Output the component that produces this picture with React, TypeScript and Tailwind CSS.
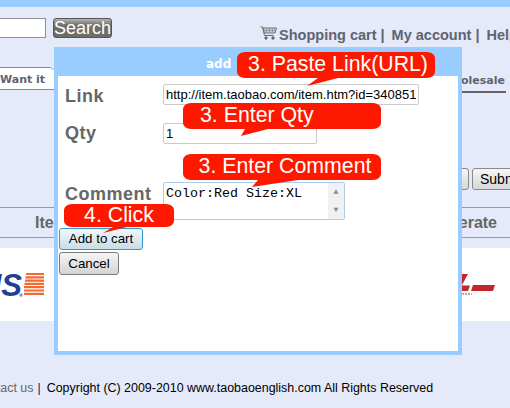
const sans = "font-['Liberation_Sans',Arial,sans-serif]";

function Callout({ className, text, tail }: { className: string; text: string; tail: string }) {
  return (
    <div className={`absolute z-20 ${className}`}>
      <div className="flex h-full items-center justify-center rounded-[8px/6px] bg-[#fe1800] text-[21.3px] leading-none text-white">
        {text}
      </div>
      <svg className="absolute left-0 top-full overflow-visible" width="1" height="1">
        <polygon points={tail} fill="#fe1800" />
      </svg>
    </div>
  );
}

function Cart() {
  return (
    <svg width="17" height="14" viewBox="0 0 17 14" fill="none" stroke="#6d6d6d" strokeWidth="1">
      <path d="M0.500 1h2l2 8.500h9" />
      <path d="M3 2h13.500l-1.500 5H4.500z" fill="#c7d1d4" />
      <path d="M6.500 2.500v4M9.500 2.500v4M12.500 2.500v4M4 4.500h11.500" stroke="#8f9ea3" />
      <circle cx="6" cy="12" r="1.200" fill="#555" />
      <circle cx="13" cy="12" r="1.200" fill="#555" />
    </svg>
  );
}

export default function App() {
  return (
    <div className={`relative h-[408px] w-[510px] overflow-hidden bg-[#e4eaf9] ${sans}`}>
      <div className="h-[7px] bg-[#99ccff]" />

      <div className="ml-[-10px] mt-[11px] flex items-start">
        <input readOnly className="h-[20px] w-[56px] border border-[#8f8f8f] bg-white" />
        <button className="ml-[7px] h-[20px] w-[61px] rounded-[3px] border border-[#555] bg-[linear-gradient(#b5b3ae,#6f6d68_35%)] text-[18px] leading-[18px] text-white">
          Search
        </button>
        <div className="ml-[148px] mt-[8px] flex w-[260px] items-start whitespace-nowrap text-[14.5px] font-bold leading-[18px] text-[#5f6470]">
          <Cart />
          <span className="ml-[2px]">Shopping cart |</span>
          <span className="ml-[7px]">My account |</span>
          <span className="ml-[7px]">Help</span>
        </div>
      </div>

      <div className="absolute left-[-40px] top-[67px] h-[23px] w-[95px] rounded-tr-[6px] border-y border-[#8a8a8a] bg-white pl-[40px] text-[11px] font-bold leading-[23px] text-[#5f6470] [font-family:'DejaVu_Sans',sans-serif]">
        Want it
      </div>
      <div className="absolute left-[420px] top-[74px] w-[86px] border-b-2 border-[#666] pb-[3px] pl-[21px] text-[11px] font-bold leading-[14px] whitespace-nowrap text-[#5f6470] [font-family:'DejaVu_Sans',sans-serif]">
        Wholesale
      </div>

      <div className="absolute left-[440px] top-[168px] h-[22px] w-[29px] rounded-[3px] border border-[#8a8a8a] bg-gradient-to-b from-[#f6f6f6] to-[#d8d8d8]" />
      <button className="absolute left-[472px] top-[168px] h-[22px] w-[60px] rounded-[3px] border border-[#8a8a8a] bg-gradient-to-b from-[#f6f6f6] to-[#d8d8d8] pl-[7px] text-left text-[14px] text-black">
        Submit
      </button>

      <div className="absolute left-0 top-[207px] flex h-[31px] w-full items-center justify-between border-y border-[#999] px-[35px] text-[16px] font-bold text-[#666]">
        <span>Item</span>
        <span className="-mr-[22px]">Operate</span>
      </div>

      <div className="absolute left-0 top-[248px] h-[73px] w-full bg-white">
        <svg className="absolute left-0 top-[24px]" width="46" height="27" viewBox="0 0 46 27">
          <text x="22" y="24" textAnchor="end" fontSize="31" fontWeight="900" fontStyle="italic" fill="#1d3f94" fontFamily="Liberation Sans">MS</text>
          <path d="M26 2h18M25.500 5.300h18.500M25 8.600h19M24.500 11.900h19.500M24 15.200h20M24 18.500h20M24 21.800h20" stroke="#ef6a35" strokeWidth="2.200" />
          <circle cx="21" cy="23" r="1.800" fill="#8aa0c8" />
        </svg>
        <svg className="absolute left-[462px] top-[26px]" width="33" height="24" viewBox="0 0 33 24">
          <path d="M0 0h6L0 11zM0 11.500h8l-2 5.500H0zM11 11h22l-2 6H9z" fill="#c1272d" />
          <path d="M0 20h10" stroke="#b9a9a9" strokeWidth="2" strokeDasharray="2 1" />
        </svg>
      </div>

      <div className="absolute left-0 top-[380px] flex whitespace-nowrap text-[12.45px] leading-[16px]">
        <span className="ml-[-26px] text-[#666]">Contact us</span>
        <span className="ml-[4px] text-[#3a0a50]">|</span>
        <span className="ml-[6px] text-black">Copyright (C) 2009-2010 www.taobaoenglish.com All Rights Reserved</span>
      </div>

      <div className="absolute left-[54px] top-[47px] z-10 h-[308px] w-[408px] border-x-4 border-b-4 border-[#99ccff] bg-white">
        <div className="h-[29px] bg-[#99ccff] pl-[148px] pt-[9px] text-[12px] font-bold leading-[16px] text-white [font-family:'DejaVu_Sans',sans-serif]">
          add
        </div>
        <div className="px-[2px]">
          <div className="flex h-[37px] items-start pl-[5px] pt-[8px]">
            <span className="mt-px w-[98px] text-[18px] font-bold leading-[22px] tracking-[0.5px] text-[#666]">Link</span>
            <input
              readOnly
              value="http://item.taobao.com/item.htm?id=340851"
              className="h-[21px] w-[256px] rounded-[2px] border border-[#c9c9c9] px-[2px] text-[13px] text-black"
            />
          </div>
          <div className="flex h-[60px] items-start pl-[5px] pt-[9px]">
            <span className="w-[98px] text-[18px] font-bold leading-[22px] tracking-[0.5px] text-[#666]">Qty</span>
            <input
              readOnly
              value="1"
              className="mt-px h-[21px] w-[154px] rounded-[2px] border border-[#c9c9c9] px-[2px] text-[13px] text-black"
            />
          </div>
          <div className="flex h-[50px] items-start pl-[5px]">
            <span className="mt-[10px] w-[98px] text-[18px] font-bold leading-[22px] tracking-[0.5px] text-[#666]">Comment</span>
            <div className="relative mt-[9px] h-[38px] w-[182px] rounded-[2px] border border-[#a9cdea] pl-[2px] pt-[3px] font-['Liberation_Mono',monospace] text-[13.33px] leading-[16px] text-black">
              Color:Red Size:XL
              <div className="absolute inset-y-0 right-0 w-[16px] bg-[#f1f1f1] text-center text-[8px] leading-[18px] text-[#888]">
                <div>▲</div>
                <div>▼</div>
              </div>
            </div>
          </div>
          <div className="-ml-px flex flex-col items-start gap-[2px] pt-[5px]">
            <button className="h-[22px] w-[84px] rounded-[3px] border border-[#2f9bd0] bg-gradient-to-b from-[#f2f8fb] to-[#c9dce6] text-[13.33px] text-black">
              Add to cart
            </button>
            <button className="h-[23px] w-[60px] rounded-[3px] border border-[#7a7a7a] bg-gradient-to-b from-[#f6f6f6] to-[#d4d4d4] text-[13.33px] text-black">
              Cancel
            </button>
          </div>
        </div>
      </div>

      <Callout className="left-[237px] top-[52px] h-[26px] w-[198px] [&>div]:pl-[4px]" text="3. Paste Link(URL)" tail="81,0 70,8 101,0" />
      <Callout className="left-[183px] top-[103px] h-[26px] w-[198px] [&>div]:justify-start [&>div]:pl-[17px]" text="3. Enter Qty" tail="62,0 58,7 85,0" />
      <Callout className="left-[183px] top-[154px] h-[26px] w-[198px] [&>div]:pl-[6px]" text="3. Enter Comment" tail="75,0 69,7 115,0" />
      <Callout className="left-[64px] top-[204px] h-[23px] w-[110px]" text="4. Click" tail="49,0 39,6 63,0" />
    </div>
  );
}
